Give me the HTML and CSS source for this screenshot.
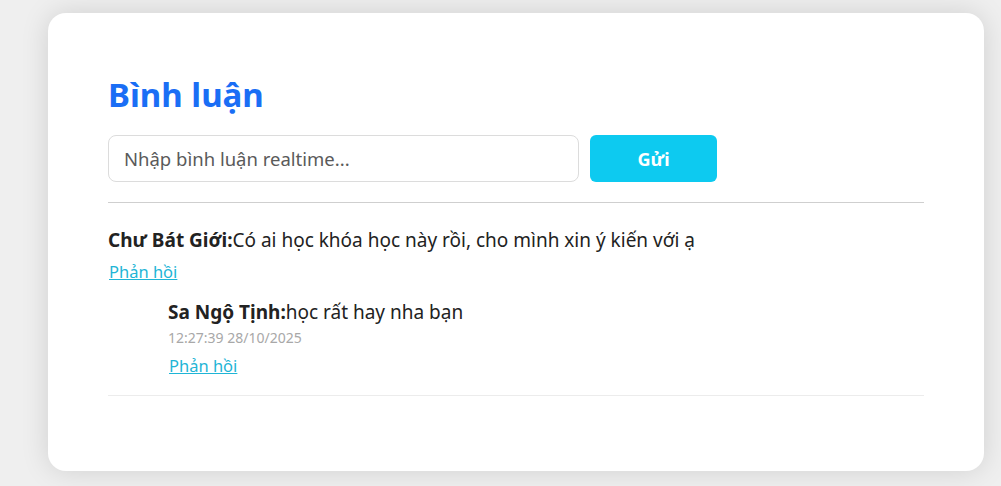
FILE: index.html
```html
<!DOCTYPE html>
<html lang="vi">
<head>
<meta charset="utf-8">
<title>Bình luận</title>
<link rel="stylesheet" href="styles.css">
</head>
<body>
<div class="page">
  <section class="card">
    <h2 class="title">Bình luận</h2>
    <form class="composer" onsubmit="return false">
      <input class="composer-input" type="text" placeholder="Nhập bình luận realtime...">
      <button class="composer-btn" type="submit">Gửi</button>
    </form>
    <div class="comments">
      <div class="comment">
        <div class="comment-text"><b class="author">Chư Bát Giới:</b>Có ai học khóa học này rồi, cho mình xin ý kiến với ạ</div>
        <a class="reply-link" href="#">Phản hồi</a>
        <div class="replies">
          <div class="reply">
            <div class="comment-text"><b class="author">Sa Ngộ Tịnh:</b>học rất hay nha bạn</div>
            <div class="time">12:27:39 28/10/2025</div>
            <a class="reply-link" href="#">Phản hồi</a>
          </div>
        </div>
      </div>
    </div>
  </section>
</div>
</body>
</html>
```

FILE: styles.css
```css
html, body {
  margin: 0;
  padding: 0;
}
body {
  background: #efefef;
  font-family: "Noto Sans", "Open Sans", sans-serif;
  color: #222;
}
.page {
  padding: 13px 17px 16px 48px;
}
.card {
  background: #fff;
  border-radius: 18px;
  box-shadow: 0 0 28px rgba(0, 0, 0, 0.13);
  padding: 58px 60px 75px 60px;
}
.title {
  margin: 0 0 16px;
  font-size: 33px;
  font-weight: 700;
  color: #1a6ef5;
  line-height: 48px;
}
.composer {
  display: flex;
  gap: 11px;
  padding-bottom: 20px;
  border-bottom: 1px solid #cfcfcf;
}
.composer-input {
  width: 471px;
  height: 47px;
  box-sizing: border-box;
  border: 1px solid #dcdcdc;
  border-radius: 8px;
  padding: 0 15px;
  font-family: inherit;
  font-size: 18.5px;
  color: #333;
  outline: none;
}
.composer-input::placeholder {
  color: #5a5a5a;
}
.composer-btn {
  width: 127px;
  height: 47px;
  border: none;
  border-radius: 6px;
  background: #0dcaf0;
  color: #fff;
  font-family: inherit;
  font-size: 18px;
  font-weight: 700;
}
.comments {
  padding-top: 22px;
}
.comment {
  padding-bottom: 17px;
  border-bottom: 1px solid #ececec;
}
.comment-text {
  font-size: 19px;
  line-height: 30px;
}
.author {
  font-weight: 700;
}
.reply-link {
  display: inline-block;
  margin-top: 5px;
  margin-left: 1px;
  font-size: 16.5px;
  line-height: 24px;
  color: #1fb5d6;
  text-decoration: underline;
}
.replies {
  padding-left: 60px;
  margin-top: 13px;
}
.reply .reply-link {
  margin-top: 6px;
}
.time {
  font-size: 14px;
  line-height: 21px;
  color: #a8a8a8;
}
```
